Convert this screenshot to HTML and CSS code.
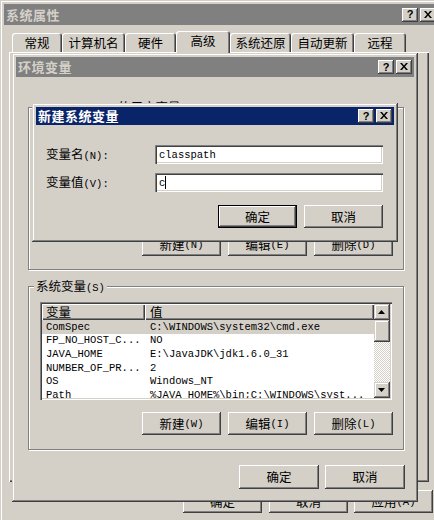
FILE: index.html
```html
<!DOCTYPE html>
<html>
<head>
<meta charset="utf-8">
<link rel="stylesheet" href="styles.css">
</head>
<body>
<div class="win outer">
  <div class="title"><span class="ttext">系统属性</span><div class="tbtns"><span class="tb">?</span><span class="tb"><svg width="16" height="14" viewBox="0 0 16 14"><path d="M4 3h2l2 2.5 2-2.5h2l-3 3.5 3 3.5h-2l-2-2.5-2 2.5h-2l3-3.5z" fill="#000"/></svg></span></div></div>
  <div class="tabs">
    <div class="tab t1">常规</div>
    <div class="tab t2">计算机名</div>
    <div class="tab t3">硬件</div>
    <div class="tab t4 sel">高级</div>
    <div class="tab t5">系统还原</div>
    <div class="tab t6">自动更新</div>
    <div class="tab t7">远程</div>
  </div>
  <div class="panel"></div>
  <div class="obtns">
    <div class="btn">确定</div>
    <div class="btn">取消</div>
    <div class="btn">应用<span class="lat">(A)</span></div>
  </div>
</div>

<div class="win env">
  <div class="title"><span class="ttext">环境变量</span><div class="tbtns"><span class="tb">?</span><span class="tb"><svg width="16" height="14" viewBox="0 0 16 14"><path d="M4 3h2l2 2.5 2-2.5h2l-3 3.5 3 3.5h-2l-2-2.5-2 2.5h-2l3-3.5z" fill="#000"/></svg></span></div></div>
  <div class="envbody">
    <div class="group ug">
      <div class="glabel"><span class="lat">caomanxuewen </span>的用户变量<span class="lat">(U)</span></div>
      <div class="brow gb">
        <div class="btn">新建<span class="lat">(N)</span></div>
        <div class="btn">编辑<span class="lat">(E)</span></div>
        <div class="btn">删除<span class="lat">(D)</span></div>
      </div>
    </div>
    <div class="group sg">
      <div class="glabel">系统变量<span class="lat">(S)</span></div>
      <div class="lv">
        <div class="lvmain">
          <div class="hdr"><div class="hc hc1">变量</div><div class="hc hc2">值</div></div>
          <div class="row sel"><div class="c1">ComSpec</div><div class="c2">C:\WINDOWS\system32\cmd.exe</div></div>
          <div class="row"><div class="c1">FP_NO_HOST_C...</div><div class="c2">NO</div></div>
          <div class="row"><div class="c1">JAVA_HOME</div><div class="c2">E:\JavaJDK\jdk1.6.0_31</div></div>
          <div class="row"><div class="c1">NUMBER_OF_PR...</div><div class="c2">2</div></div>
          <div class="row"><div class="c1">OS</div><div class="c2">Windows_NT</div></div>
          <div class="row"><div class="c1">Path</div><div class="c2">%JAVA_HOME%\bin;C:\WINDOWS\syst...</div></div>
        </div>
        <div class="sb">
          <div class="sbb"><svg width="16" height="16" viewBox="0 0 16 16"><path d="M4 10h7l-3.5-4z" fill="#000"/></svg></div>
          <div class="thumb"></div>
          <div class="track"></div>
          <div class="sbb"><svg width="16" height="16" viewBox="0 0 16 16"><path d="M4 6h7l-3.5 4z" fill="#000"/></svg></div>
        </div>
      </div>
      <div class="brow gb sgb">
        <div class="btn">新建<span class="lat">(W)</span></div>
        <div class="btn">编辑<span class="lat">(I)</span></div>
        <div class="btn">删除<span class="lat">(L)</span></div>
      </div>
    </div>
    <div class="brow eb">
      <div class="btn wide">确定</div>
      <div class="btn wide">取消</div>
    </div>
  </div>
</div>

<div class="win dlg">
  <div class="title active"><span class="ttext">新建系统变量</span><div class="tbtns"><span class="tb">?</span><span class="tb"><svg width="16" height="14" viewBox="0 0 16 14"><path d="M4 3h2l2 2.5 2-2.5h2l-3 3.5 3 3.5h-2l-2-2.5-2 2.5h-2l3-3.5z" fill="#000"/></svg></span></div></div>
  <div class="dbody">
    <div class="frow"><div class="flabel">变量名<span class="lat">(N):</span></div><div class="inp"><span class="lat">classpath</span></div></div>
    <div class="frow r2"><div class="flabel">变量值<span class="lat">(V):</span></div><div class="inp"><span class="lat">c</span><span class="caret"></span></div></div>
    <div class="brow db">
      <div class="btn def">确定</div>
      <div class="btn">取消</div>
    </div>
  </div>
</div>
</body>
</html>
```

FILE: styles.css
```css
* { box-sizing: border-box; margin: 0; padding: 0; }
html, body { width: 434px; height: 520px; overflow: hidden; }
body {
  position: relative;
  background: #0a246a;
  font-family: "Noto Sans CJK SC", "Noto Sans", sans-serif;
  font-size: 12.5px;
  line-height: 14px;
  color: #000;
}
.lat { font-family: "Liberation Mono", monospace; font-size: 10.5px; }

.win {
  position: absolute;
  background: #d4d0c8;
  padding: 4px;
  display: flex;
  flex-direction: column;
  box-shadow: inset -1px -1px #404040, inset 1px 1px #d4d0c8, inset -2px -2px #808080, inset 2px 2px #fff;
}
.outer { left: 0; top: 0; width: 442px; height: 540px; }
.env { left: 12px; top: 53px; width: 406px; height: 449px; }
.dlg { left: 32px; top: 103px; width: 366px; height: 139px; }

.title {
  flex: none;
  height: 21px;
  display: flex;
  align-items: center;
  justify-content: space-between;
  padding: 0 2px 0 2px;
  background: #808080;
  color: #d4d0c8;
}
.env .title { height: 20px; }
.title.active { background: #0a246a; color: #fff; height: 18px; }
.ttext { font-weight: bold; font-size: 13px; letter-spacing: 0.5px; }
.tbtns { display: flex; gap: 2px; }
.tb {
  width: 16px; height: 14px;
  background: #d4d0c8;
  box-shadow: inset -1px -1px #404040, inset 1px 1px #fff, inset -2px -2px #808080;
  display: flex; align-items: center; justify-content: center;
  font: bold 11px/1 "Liberation Sans", sans-serif;
  color: #000;
}
.tb svg { display: block; }

/* tabs */
.tabs { flex: none; display: flex; align-items: flex-end; height: 21px; margin-top: 6px; padding-left: 8px; }
.tab {
  height: 19px;
  background: #d4d0c8;
  border-radius: 3px 3px 0 0;
  box-shadow: inset 1px 1px #fff, inset -1px 0 #404040, inset -2px 0 #808080;
  display: flex; align-items: center; justify-content: center;
  padding-top: 1px;
}
.tab.sel { height: 22px; margin-bottom: -1px; position: relative; z-index: 1; padding-bottom: 3px; }
.t1 { width: 50px; }
.t2 { width: 63px; }
.t3 { width: 51px; }
.t4 { width: 54px; }
.t5 { width: 61px; }
.t6 { width: 63px; }
.t7 { width: 52px; }
.panel {
  flex: none;
  margin-left: 5px;
  width: 420px; height: 430px;
  box-shadow: inset 1px 1px #fff, inset -1px -1px #404040, inset -2px -2px #808080;
}
.obtns { display: flex; gap: 7px; margin: 8px 0 0 179px; }
.obtns .btn:last-child { margin-left: -1px; }

/* buttons */
.btn {
  flex: none;
  width: 79px; height: 23px;
  background: #d4d0c8;
  box-shadow: inset -1px -1px #404040, inset 1px 1px #fff, inset -2px -2px #808080;
  display: flex; align-items: center; justify-content: center;
}
.btn.wide { width: 80px; height: 24px; }
.btn.def {
  box-shadow: inset 0 0 0 1px #000, inset -2px -2px #404040, inset 2px 2px #fff, inset -3px -3px #808080;
}
.brow { display: flex; justify-content: flex-end; }

/* env body */
.envbody { flex: 1; display: flex; flex-direction: column; padding-left: 12px; }
.group {
  flex: none;
  width: 376px;
  border: 1px solid #808080;
  box-shadow: 1px 1px #fff, inset 1px 1px #fff;
  display: flex; flex-direction: column;
}
.ug { height: 163px; margin-top: 30px; padding-bottom: 13px; }
.sg { height: 164px; margin-top: 16px; }
.glabel {
  align-self: flex-start;
  margin: -8px 0 0 5px;
  padding: 0 2px;
  height: 14px;
  background: #d4d0c8;
  white-space: nowrap;
}
.gb { gap: 7px; padding-right: 10px; }
.ug .gb { margin-top: auto; }
.sgb { margin-top: 12px; }
.eb { gap: 6px; margin-top: 15px; padding-right: 9px; }

/* list view */
.lv {
  flex: none;
  margin: 9px 0 0 11px;
  width: 352px; height: 98px;
  padding: 2px;
  background: #fff;
  display: flex;
  box-shadow: inset 1px 1px #808080, inset 2px 2px #404040, inset -1px -1px #fff, inset -2px -2px #d4d0c8;
}
.lvmain { width: 332px; overflow: hidden; }
.hdr { display: flex; height: 16px; }
.hc {
  background: #d4d0c8;
  box-shadow: inset 1px 1px #fff, inset -1px -1px #404040, inset -2px -2px #808080;
  display: flex; align-items: center;
}
.hc1 { width: 103px; padding-left: 4px; }
.hc2 { width: 229px; padding-left: 5px; }
.row {
  display: flex; align-items: center;
  height: 13.6px;
  font-family: "Liberation Mono", monospace;
  font-size: 10.5px;
  white-space: nowrap;
}
.row.sel { background: #d4d0c8; }
.c1 { width: 103px; padding-left: 4px; flex: none; }
.c2 { padding-left: 5px; }
.sb { width: 16px; flex: none; display: flex; flex-direction: column; }
.sbb, .thumb {
  flex: none;
  background: #d4d0c8;
  box-shadow: inset -1px -1px #404040, inset 1px 1px #d4d0c8, inset -2px -2px #808080, inset 2px 2px #fff;
}
.sbb { height: 16px; }
.sbb svg { display: block; }
.thumb { height: 22px; }
.track { flex: 1; background: repeating-conic-gradient(#fff 0 25%, #d4d0c8 0 50%) 0 0 / 2px 2px; }

/* new dialog */
.dbody { flex: 1; padding: 20px 11px 0 10px; }
.frow { display: flex; align-items: center; }
.r2 { margin-top: 9px; }
.flabel { width: 109px; flex: none; }
.inp {
  width: 228px; height: 19px;
  background: #fff;
  padding: 0 4px;
  display: flex; align-items: center;
  box-shadow: inset 1px 1px #808080, inset 2px 2px #404040, inset -1px -1px #fff, inset -2px -2px #d4d0c8;
}
.caret { display: block; width: 1px; height: 13px; background: #000; margin-left: 0; }
.db { gap: 7px; margin-top: 13px; }
```
